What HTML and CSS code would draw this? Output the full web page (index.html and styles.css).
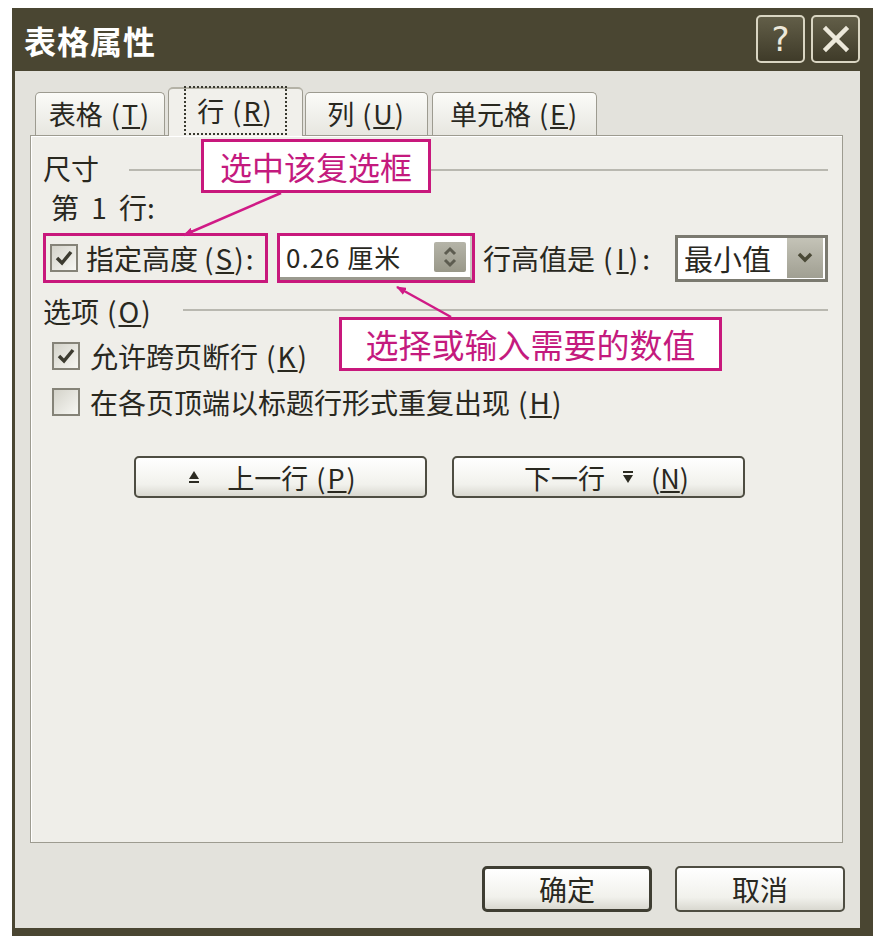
FILE: index.html
```html
<!DOCTYPE html>
<html lang="zh">
<head>
    <meta charset="UTF-8">
    <title>表格属性</title>
    <link rel="stylesheet" href="styles.css">
</head>
<body>
    <div class="dialog">
        <div class="titlebar">
            <span class="title">表格属性</span>
            <div class="title-buttons">
                <span class="tbtn">?</span>
                <span class="tbtn">
                    <svg width="30" height="30" viewBox="0 0 30 30"><path d="M5 5 L25 25 M25 5 L5 25" stroke="#ece8da" stroke-width="4.5" stroke-linecap="square"/></svg>
                </span>
            </div>
        </div>

        <div class="body">
            <div class="tabs">
                <div class="tab t1">表格<span class="acc">(<u>T</u>)</span></div>
                <div class="tab t2 active"><span class="focus">行<span class="acc">(<u>R</u>)</span></span></div>
                <div class="tab t3">列<span class="acc">(<u>U</u>)</span></div>
                <div class="tab t4">单元格<span class="acc">(<u>E</u>)</span></div>
            </div>

            <div class="panel">
                <div class="group-title"><span>尺寸</span><i class="rule"></i></div>
                <div class="line indent">第 1 行:</div>

                <div class="size-row">
                    <div class="hl hl-check">
                        <span class="checkbox checked">
                            <svg width="20" height="20" viewBox="0 0 20 20"><path d="M3 10 L8 15 L17 4" fill="none" stroke="#3c3b30" stroke-width="3.5"/></svg>
                        </span>
                        <span>指定高度<span class="acc">(<u>S</u>):</span></span>
                    </div>
                    <div class="hl hl-input">
                        <div class="input">
                            <span>0.26 厘米</span>
                            <span class="spin">
                                <svg width="16" height="22" viewBox="0 0 16 22"><path d="M3 8 L8 3 L13 8 M3 14 L8 19 L13 14" fill="none" stroke="#5d5c50" stroke-width="3"/></svg>
                            </span>
                        </div>
                    </div>
                    <span class="row-label">行高值是<span class="acc">(<u>I</u>):</span></span>
                    <div class="combo">
                        <span>最小值</span>
                        <span class="drop">
                            <svg width="18" height="14" viewBox="0 0 18 14"><path d="M3 3 L9 9 L15 3" fill="none" stroke="#4a4936" stroke-width="3.5"/></svg>
                        </span>
                    </div>
                </div>

                <div class="group-title options"><span>选项<span class="acc">(<u>O</u>)</span></span><i class="rule"></i></div>

                <div class="check-line first">
                    <span class="checkbox checked">
                        <svg width="20" height="20" viewBox="0 0 20 20"><path d="M3 10 L8 15 L17 4" fill="none" stroke="#3c3b30" stroke-width="3.5"/></svg>
                    </span>
                    <span>允许跨页断行<span class="acc">(<u>K</u>)</span></span>
                </div>
                <div class="check-line">
                    <span class="checkbox"></span>
                    <span>在各页顶端以标题行形式重复出现<span class="acc">(<u>H</u>)</span></span>
                </div>

                <div class="nav">
                    <button class="btn nav-btn prev">
                        <svg width="14" height="16" viewBox="0 0 14 16"><path d="M7 2 L12 10 L2 10 Z M2 12 H12 V14 H2 Z" fill="#2c2b22"/></svg>
                        <span>上一行<span class="acc">(<u>P</u>)</span></span>
                    </button>
                    <button class="btn nav-btn next">
                        <span>下一行</span>
                        <svg width="14" height="16" viewBox="0 0 14 16"><path d="M2 2 H12 V4 H2 Z M2 6 L12 6 L7 14 Z" fill="#2c2b22"/></svg>
                        <span>(<u>N</u>)</span>
                    </button>
                </div>

                <!-- 标注 -->
                <svg class="arrows" width="813" height="260" viewBox="0 0 813 260">
                    <defs>
                        <marker id="head" markerWidth="10" markerHeight="8" refX="9" refY="4" orient="auto" markerUnits="userSpaceOnUse">
                            <path d="M0 0 L10 4 L0 8 Z" fill="#d01a86"/>
                        </marker>
                    </defs>
                    <line x1="250" y1="57" x2="153" y2="99" stroke="#d01a86" stroke-width="2.5" marker-end="url(#head)"/>
                    <line x1="420" y1="181" x2="366" y2="151" stroke="#d01a86" stroke-width="2.5" marker-end="url(#head)"/>
                </svg>
                <div class="callout callout-check">选中该复选框</div>
                <div class="callout callout-value">选择或输入需要的数值</div>
            </div>

            <div class="footer">
                <button class="btn foot-btn default">确定</button>
                <button class="btn foot-btn">取消</button>
            </div>
        </div>
    </div>
</body>
</html>
```

FILE: styles.css
```css
body {
    margin: 0;
    padding: 8px 0 0 12px;
    background: #ffffff;
    font-family: "Noto Sans CJK SC", "Noto Sans", sans-serif;
    color: #29281f;
}

u {
    text-decoration: underline;
    text-underline-offset: 2px;
}

.acc {
    margin-left: 8px;
    letter-spacing: 2px;
}

.dialog {
    width: 845px;
    height: 920px;
    background: #4a4632;
    border-left: 3px solid #4a4632;
    border-right: 13px solid #4a4632;
    border-bottom: 8px solid #4a4632;
    display: flex;
    flex-direction: column;
}

.titlebar {
    flex: none;
    height: 63px;
    display: flex;
    align-items: center;
    justify-content: space-between;
    padding: 0 0 0 9px;
}

.title {
    color: #ffffff;
    font-size: 32px;
    font-weight: bold;
    letter-spacing: 1px;
}

.title-buttons {
    display: flex;
    gap: 6px;
    align-self: flex-start;
    margin-top: 7px;
}

.tbtn {
    width: 45px;
    height: 44px;
    border: 2px solid #d9d5c2;
    border-radius: 5px;
    background: linear-gradient(#625e48, #3f3b29);
    color: #ece8da;
    font-family: "DejaVu Sans", sans-serif;
    font-size: 34px;
    display: flex;
    align-items: center;
    justify-content: center;
}

.body {
    flex: 1;
    background: #e3e2dc;
    padding: 16px 17px 0 15px;
    display: flex;
    flex-direction: column;
}

.tabs {
    flex: none;
    display: flex;
    align-items: flex-end;
    gap: 4px;
    padding-left: 5px;
    height: 48px;
}

.tab {
    height: 43px;
    box-sizing: border-box;
    border: 1px solid #9d9b90;
    border-bottom: none;
    border-radius: 5px 5px 0 0;
    background: linear-gradient(#fbfbf8, #e7e6e0);
    font-size: 27px;
    line-height: 42px;
    text-align: center;
    white-space: nowrap;
}

.t1 { width: 130px; }
.t2 { width: 135px; }
.t3 { width: 123px; }
.t4 { width: 165px; }

.tab.active {
    height: 49px;
    margin: 0 -2px -1px -1px;
    background: #f1f0eb;
    border-top: 2px solid #b4b2a6;
    line-height: 44px;
    position: relative;
    z-index: 1;
}

.focus {
    outline: 2px dotted #3a3a30;
    outline-offset: 3px;
    padding: 0 8px;
}

.panel {
    flex: none;
    height: 708px;
    box-sizing: border-box;
    background: #efeee9;
    border: 1px solid #9d9b90;
    box-shadow: inset 1px 1px 0 #ffffff;
    position: relative;
    padding: 18px 14px 0 12px;
    font-size: 28px;
}

.group-title {
    height: 28px;
    display: flex;
    align-items: center;
    gap: 30px;
    line-height: 28px;
}

.group-title .rule {
    flex: 1;
    border-top: 2px solid #b9b8b0;
    margin-top: 4px;
}

.group-title.options {
    margin-top: 14px;
}

.options .rule {
    margin-top: -2px;
}

.line {
    height: 28px;
    line-height: 28px;
    margin-top: 11px;
}

.indent {
    padding-left: 8px;
    word-spacing: 6px;
}

.size-row {
    height: 50px;
    margin-top: 12px;
    display: flex;
    align-items: center;
}

.hl {
    border: 3px solid #c8187c;
    height: 50px;
    box-sizing: border-box;
    display: flex;
    align-items: center;
}

.hl-check {
    width: 225px;
    padding-left: 4px;
    gap: 8px;
    white-space: nowrap;
}

.hl-check .acc {
    margin-left: 6px;
}

.hl-input {
    width: 198px;
    margin-left: 9px;
    background: #ffffff;
}

.input {
    flex: 1;
    height: 44px;
    box-sizing: border-box;
    border-bottom: 3px solid #9a998e;
    border-right: 2px solid #c9c8c0;
    display: flex;
    align-items: center;
    justify-content: space-between;
    padding: 0 4px 0 6px;
    font-size: 26px;
    letter-spacing: 1px;
    white-space: nowrap;
}

.spin {
    width: 32px;
    height: 30px;
    background: linear-gradient(#b5b4a8, #999889);
    border-radius: 2px;
    display: flex;
    align-items: center;
    justify-content: center;
}

.row-label {
    margin-left: 8px;
    white-space: nowrap;
}

.row-label .acc {
    letter-spacing: 4px;
}

.combo {
    margin-left: auto;
    width: 153px;
    height: 47px;
    box-sizing: border-box;
    border: 3px solid #7b7a70;
    background: #ffffff;
    display: flex;
    align-items: center;
    justify-content: space-between;
    padding: 0 2px 0 6px;
    font-size: 29px;
}

.drop {
    width: 36px;
    height: 40px;
    background: linear-gradient(#c4c3b7, #a09f92);
    display: flex;
    align-items: center;
    justify-content: center;
}

.checkbox {
    width: 28px;
    height: 28px;
    box-sizing: border-box;
    border: 2px solid #858378;
    background: linear-gradient(135deg, #d4d3ca, #f7f7f3);
    display: inline-flex;
    align-items: center;
    justify-content: center;
    flex: none;
}

.check-line {
    height: 30px;
    margin-top: 16px;
    padding-left: 9px;
    display: flex;
    align-items: center;
    gap: 10px;
    white-space: nowrap;
}

.check-line.first {
    margin-top: 16px;
}

.nav {
    margin-top: 39px;
    display: flex;
    justify-content: center;
    gap: 25px;
    padding-left: 8px;
}

.btn {
    font-family: "Noto Sans CJK SC", "Noto Sans", sans-serif;
    color: #29281f;
    border: 2px solid #4e4d42;
    border-radius: 5px;
    background: linear-gradient(#ffffff, #f1f1ec 70%, #d9d8d0);
    display: flex;
    align-items: center;
    justify-content: center;
    gap: 14px;
    padding: 0;
}

.nav-btn {
    width: 293px;
    height: 42px;
    font-size: 27px;
}

.nav-btn.prev {
    gap: 26px;
    padding-right: 16px;
}

.nav-btn.next {
    gap: 16px;
    padding-left: 16px;
}

.footer {
    flex: none;
    display: flex;
    justify-content: flex-end;
    gap: 23px;
    margin: 23px -2px 0 0;
}

.foot-btn {
    width: 170px;
    height: 46px;
    font-size: 28px;
}

.foot-btn.default {
    border: 3px solid #3f3e33;
}

.arrows {
    position: absolute;
    left: 0;
    top: 0;
    pointer-events: none;
}

.callout {
    position: absolute;
    background: #ffffff;
    border: 3px solid #c8187c;
    color: #c41a7e;
    box-sizing: border-box;
    display: flex;
    align-items: center;
    justify-content: center;
    white-space: nowrap;
}

.callout-check {
    left: 170px;
    top: 3px;
    width: 230px;
    height: 54px;
    font-size: 32px;
}

.callout-value {
    left: 308px;
    top: 181px;
    width: 383px;
    height: 54px;
    font-size: 33px;
}
```
